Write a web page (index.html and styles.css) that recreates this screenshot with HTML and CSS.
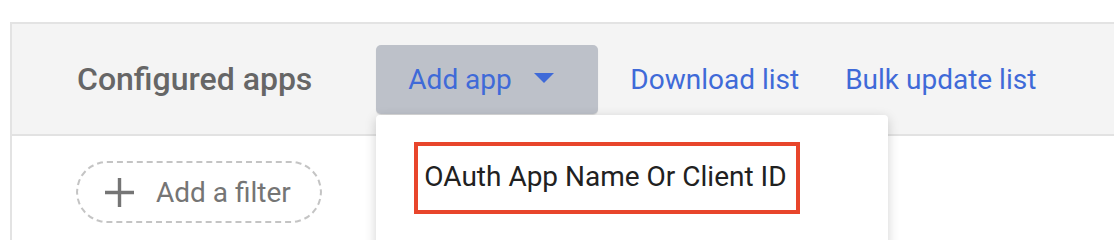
FILE: index.html
```html
<!DOCTYPE html>
<html lang="en">
<head>
<meta charset="utf-8">
<title>Configured apps</title>
<link rel="stylesheet" href="styles.css">
</head>
<body>
<div class="panel">
  <div class="header">
    <h2 class="title">Configured apps</h2>
    <div class="add-wrap">
      <button class="add-btn" type="button">
        <span>Add app</span>
        <svg class="caret" width="20" height="10" viewBox="0 0 20 10"><path d="M0 0H20L10 10Z" fill="#3f6ad8"/></svg>
      </button>
      <div class="menu">
        <div class="menu-item">OAuth App Name Or Client ID</div>
      </div>
    </div>
    <a class="link link-first" href="#">Download list</a>
    <a class="link" href="#">Bulk update list</a>
  </div>
  <div class="body">
    <button class="filter" type="button">
      <svg class="plus" width="29" height="29" viewBox="0 0 29 29"><path d="M14.5 0V29M0 14.5H29" stroke="#757575" stroke-width="3.4" fill="none"/></svg>
      <span>Add a filter</span>
    </button>
  </div>
</div>
</body>
</html>
```

FILE: styles.css
```css
html, body {
  margin: 0;
  padding: 0;
  background: #ffffff;
  overflow: hidden;
  font-family: Roboto, "Liberation Sans", Arial, sans-serif;
}

.panel {
  margin: 22px 0 0 10px;
  height: 218px;
  border-top: 2px solid #e3e3e3;
  border-left: 2px solid #e3e3e3;
  box-sizing: border-box;
  overflow: hidden;
}

.header {
  height: 110px;
  background: #f4f4f4;
  border-bottom: 2px solid #e2e2e2;
  display: flex;
  align-items: center;
  padding-left: 65px;
}

.title {
  margin: 0 64px 0 0;
  font-size: 32px;
  font-weight: 500;
  color: #666666;
  line-height: 1;
}

.add-wrap {
  position: relative;
}

.add-btn {
  display: flex;
  align-items: center;
  width: 222px;
  height: 69px;
  padding: 0 0 0 32px;
  border: none;
  border-radius: 5px;
  background: #bdc1c9;
  box-shadow: 0 1px 1px rgba(0, 0, 0, 0.12);
  font-family: inherit;
  font-size: 28px;
  color: #3f6ad8;
  cursor: pointer;
}

.caret {
  margin-left: 22px;
  margin-top: -2px;
}

.menu {
  position: absolute;
  left: 0;
  top: 70px;
  width: 512px;
  height: 140px;
  background: #ffffff;
  border-radius: 4px;
  box-shadow: 0 3px 12px rgba(0, 0, 0, 0.18);
  padding: 27px 0 0 38px;
  box-sizing: border-box;
  z-index: 2;
}

.menu-item {
  width: 386px;
  height: 72px;
  box-sizing: border-box;
  border: 4px solid #e8452b;
  display: flex;
  align-items: center;
  padding-left: 6px;
  padding-bottom: 2px;
  font-size: 28px;
  color: #212121;
}

.link {
  font-size: 28px;
  color: #3f6ad8;
  text-decoration: none;
}

.link-first {
  margin-left: 32px;
  margin-right: 46px;
}

.body {
  padding: 25px 0 0 64px;
}

.filter {
  display: flex;
  align-items: center;
  height: 62px;
  width: 246px;
  padding: 0 0 0 27px;
  box-sizing: border-box;
  border: 2px dashed #c4c4c4;
  border-radius: 31px;
  background: #ffffff;
  font-family: inherit;
  font-size: 28px;
  color: #757575;
  cursor: pointer;
}

.plus {
  margin-right: 22px;
}
```
